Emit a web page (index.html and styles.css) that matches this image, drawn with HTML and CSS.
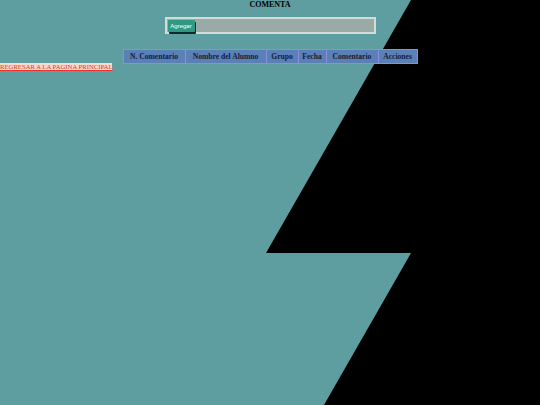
FILE: index.html
```html
<!DOCTYPE html>
<html lang="es">
<head>
<meta charset="utf-8">
<title>Comenta</title>
<link rel="stylesheet" href="styles.css">
</head>
<body>
<svg class="backdrop" width="540" height="405" viewBox="0 0 540 405" aria-hidden="true">
  <polygon points="411,0 540,0 540,405 324,405 411,253 266,253" fill="#000"/>
</svg>
<main class="page">
  <h1 class="title">COMENTA</h1>
  <form class="add-form">
    <button type="button" class="add-btn">Agregar</button>
  </form>
  <table class="grid">
    <thead>
      <tr>
        <th class="c1">N. Comentario</th>
        <th class="c2">Nombre del Alumno</th>
        <th class="c3">Grupo</th>
        <th class="c4">Fecha</th>
        <th class="c5">Comentario</th>
        <th class="c6">Acciones</th>
      </tr>
    </thead>
  </table>
  <a class="back" href="#">REGRESAR A LA PAGINA PRINCIPAL</a>
</main>
</body>
</html>
```
FILE: styles.css
```css
html, body {
  margin: 0;
  padding: 0;
  background: #5f9ea0;
  width: 540px;
  height: 405px;
  overflow: hidden;
  font-family: "Liberation Serif", serif;
}
.backdrop {
  position: absolute;
  left: 0;
  top: 0;
  z-index: 0;
}
.page {
  position: relative;
  z-index: 1;
  display: flex;
  flex-direction: column;
  align-items: center;
}
.title {
  margin: 0;
  padding-top: 0;
  font-size: 8px;
  line-height: 10px;
  font-weight: bold;
  color: #000;
  letter-spacing: 0;
}
.add-form {
  margin: 7px 0 0 0;
  box-sizing: border-box;
  width: 211px;
  height: 17px;
  border: 2px solid #d4dcd8;
  background: #9aaba7;
  display: flex;
  align-items: flex-start;
  padding: 1px 0 0 1px;
}
.add-btn {
  width: 27px;
  height: 12px;
  padding: 0;
  border: none;
  background: #2f9a84;
  color: #fff;
  font-family: "Liberation Sans", sans-serif;
  font-size: 6px;
  line-height: 12px;
  box-shadow: 1px 2px 0 #0f2a2a;
  border-radius: 1px;
}
.grid {
  margin-top: 15px;
  border-collapse: collapse;
  table-layout: fixed;
  width: 288px;
  background: #5b80b6;
  height: 15px;
}
.grid th {
  border: 1px solid #8c8ee6;
  padding: 0;
  font-size: 7.6px;
  line-height: 12px;
  font-weight: bold;
  color: #141c3c;
  text-align: center;
  height: 13px;
  white-space: nowrap;
}
.c1 { width: 61px; }
.c2 { width: 80px; }
.c3 { width: 31px; }
.c4 { width: 27px; }
.c5 { width: 51px; }
.c6 { width: 38px; }
.back {
  align-self: flex-start;
  margin-top: -1px;
  font-size: 6.7px;
  line-height: 8px;
  color: #e8342a;
  background: #f6d8cc;
  text-decoration: underline;
}
```
